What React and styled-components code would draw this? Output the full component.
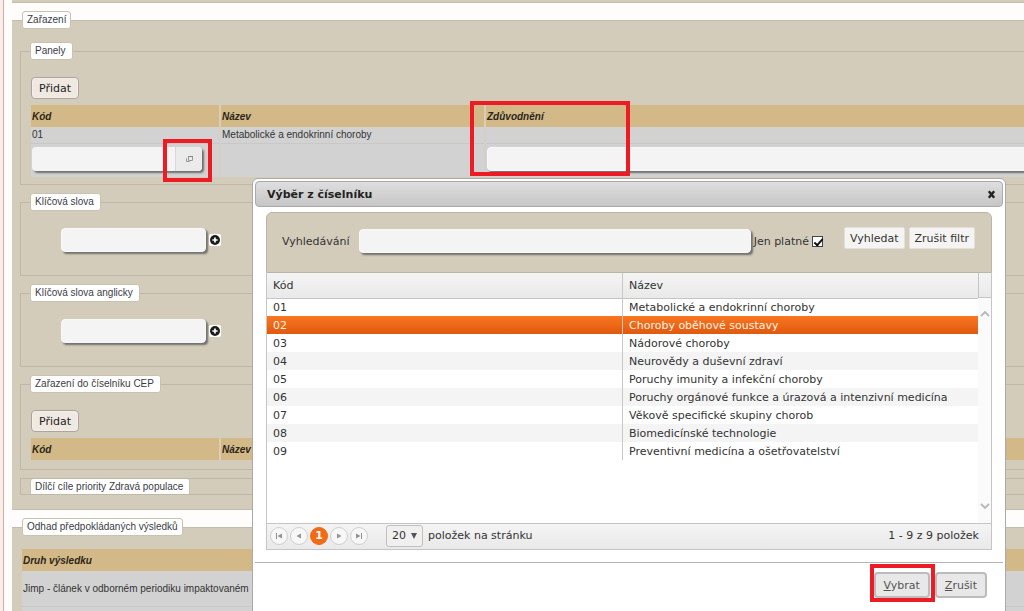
import React, {useState} from 'react';
import styled, {createGlobalStyle, css} from 'styled-components';

const GlobalStyle = createGlobalStyle`
*{
    box-sizing: border-box;
}
body{
    margin: 0;
    background: #fff;
    color: #333;
    font-family: "Liberation Sans", Arial, sans-serif;
    font-size: 10px;
}
table{
    font-size: inherit;
}
button, input, select{
    margin: 0;
    font-family: inherit;
    font-size: inherit;
    color: inherit;
}
`

const Page = styled.div`
position: relative;
display: flex;
height: 100vh;
overflow: hidden;
background: #fefdfb;

.edge{
    flex: none;
    width: 4px;
    margin-right: 8px;
    border-right: 1px solid #e0a9a0;
    background: #f8efeb;
}
`

/* the form is wider than the window and runs out of it on the right */
const Form = styled.main`
flex: 1;
min-width: 0;
margin-right: -40px;
`

const PreviousSection = styled.div`
height: 3px;
border-bottom: 1px solid #c3bbab;
background: #d4ccba;
`

const legendBox = css`
height: 18px;
padding: 0 6px 0 4px;
border: 1px solid #c9c1b2;
border-radius: 3px;
background: #fff;
color: #3c3c46;
line-height: 16px;
`

const Section = styled.fieldset`
min-width: 0;
margin: 8px 0 0;
padding: 13px ${props => props.$side}px 14px;
border: 1px solid #c3bbab;
border-left-color: #d4ccba;
background: #d4ccba;

> legend{
    ${legendBox}
    margin-left: ${props => 9 - props.$side}px;
    padding: 0 4px;
}
`

const Group = styled.fieldset`
min-width: 0;
margin: 0 0 8px;
padding: 17px 10px ${props => props.$bottom || 7}px;
border: 1px solid #c0b8a6;

> legend{
    ${legendBox}
    margin-left: -1px;
}
`

const FlatGroup = styled.fieldset`
min-width: 0;
margin: 0;
padding: 0 9px;
border: 1px solid #c0b8a6;

> legend{
    ${legendBox}
    float: left;
    height: 15px;
    border-width: 0 1px;
    border-radius: 3px 3px 0 0;
}
`

const AddButton = styled.button`
display: block;
height: 22px;
margin-bottom: 6px;
padding: 0 7px;
border: 1px solid #aaa5a0;
border-radius: 4px;
background: #efe9e2;
box-shadow: inset 0 0 0 1px #f6efe8;
color: #222;
font-family: "DejaVu Sans", Verdana, sans-serif;
font-size: 11px;
`

const DataTable = styled.table`
width: 100%;
border-collapse: collapse;
table-layout: fixed;

th, td{
    padding: 0 0 0 1px;
    text-align: left;
    border-left: 2px solid #d9cfb8;
}
td{
    border-left-color: #d3d0ca;
}
th:first-child, td:first-child{
    border-left: 0;
}
th{
    position: relative;
    height: 22px;
    background: #d3b988;
    color: #2c2619;
    font-style: italic;
}
td{
    height: 16px;
    background: #d2d2d2;
}
.edit td{
    height: 34px;
    padding-bottom: 3px;
    border-top: 1px solid #cac8c4;
}
.tall td{
    height: 35px;
    border-bottom: 1px solid #c8c8c8;
}
.code{
    width: 189px;
}
.name{
    width: 265px;
}
`

const TextBox = styled.input`
display: block;
width: ${props => props.$width || '100%'};
height: 24px;
padding: 0 6px;
border: 1px solid #f8f8f8;
border-radius: 4px;
background: #f4f4f4;
box-shadow: 2px 2px 2px #6f6f6f;
`

const Picker = styled.div`
position: relative;
display: flex;
width: 170px;
height: 24px;
border-radius: 4px;
background: #f4f4f4;
box-shadow: 2px 2px 2px #6f6f6f;

input{
    flex: 1;
    min-width: 0;
    padding: 0 6px;
    border: 0;
    background: none;
}
button{
    display: flex;
    align-items: center;
    justify-content: center;
    width: 27px;
    padding: 0;
    border: 0;
    border-left: 1px solid #d8d8d8;
    border-radius: 0 4px 4px 0;
    background: #ebebeb;
}
`

const Highlight = styled.span`
position: absolute;
z-index: 1;
top: ${props => props.$top}px;
left: ${props => props.$left}px;
width: ${props => props.$width}px;
height: ${props => props.$height}px;
border: 4px solid #ed1c24;
pointer-events: none;
`

const KeywordRow = styled.div`
display: flex;
align-items: center;
gap: 3px;
height: 24px;
margin: 0 0 16px 30px;

button{
    display: flex;
    width: 12px;
    height: 12px;
    padding: 0;
    border: 0;
    border-radius: 2px;
    background: #fff;
}
`

const Dialog = styled.section`
position: absolute;
z-index: 2;
top: 178px;
left: 252px;
right: 18px;
padding: 2px;
border: 1px solid #aaa;
border-radius: 6px;
background: #fff;
color: #333;
font-family: "DejaVu Sans", Verdana, sans-serif;
font-size: 11px;
`

const TitleBar = styled.header`
display: flex;
align-items: center;
justify-content: space-between;
height: 26px;
padding: 0 5px 0 11px;
border: 1px solid #aaa;
border-radius: 4px;
background: linear-gradient(#dedede, #c6c6c6);

h2{
    margin: 0;
    color: #222;
    font-size: 11px;
}
button{
    display: flex;
    padding: 1px;
    border: 0;
    background: none;
}
`

const DialogBody = styled.div`
padding: 5px 11px 12px;
`

const SearchPanel = styled.form`
display: flex;
align-items: flex-start;
gap: 21px;
height: 61px;
padding: 14px 16px 0 15px;
border: 1px solid #bbb5a8;
border-radius: 6px 6px 0 0;
background: #d4ccba;

.query{
    display: flex;
    flex: 1;
    align-items: center;
    gap: 3px;
    height: 28px;
}
.query label:first-child{
    margin-right: 6px;
}
.query ${TextBox}{
    flex: 1;
    min-width: 0;
}
.buttons{
    display: flex;
    gap: 4px;
}
`

const FilterButton = styled.button`
height: 22px;
padding: 0 5px;
border: 1px solid #e2e0dc;
border-radius: 2px;
background: #f5f4f3;
`

const CheckBox = styled.input`
position: relative;
width: 11px;
height: 11px;
appearance: none;
border: 1px solid #444;
background: #fff;

&:checked::after{
    content: "";
    position: absolute;
    top: 0;
    left: 3px;
    width: 3px;
    height: 7px;
    border: solid #111;
    border-width: 0 2px 2px 0;
    transform: rotate(42deg);
}
`

const Grid = styled.div`
display: flex;
align-items: stretch;
min-height: 250px;
border: solid #c5c5c5;
border-width: 0 1px;
`

const CodeTable = styled.table`
flex: 1;
align-self: flex-start;
border-collapse: collapse;
table-layout: fixed;

th, td{
    width: 50%;
    height: 18px;
    padding: 0 6px;
    text-align: left;
    font-weight: 400;
    white-space: nowrap;
}
th + th, td + td{
    border-left: 1px solid #c8c8c8;
}
th{
    height: 25px;
    border-bottom: 1px solid #c5c5c5;
    background: linear-gradient(#f4f4f4, #e9e9e9);
}
`

const CodeRow = styled.tr`
background: ${props => props.$shaded ? '#f4f4f4' : '#fff'};
cursor: pointer;

${props => props.$selected && css`
    background: linear-gradient(#fa7620, #df590f);
    color: #fff3e6;
`}
`

const Scroll = styled.div`
display: flex;
flex-direction: column;
align-items: center;
width: 13px;
background: #fafafa;

.cap{
    width: 100%;
    height: 25px;
    margin-bottom: 12px;
    border: solid #c5c5c5;
    border-width: 0 0 1px 1px;
    background: linear-gradient(#f4f4f4, #e9e9e9);
}
svg:last-child{
    margin: auto 0 13px;
}
`

const Pager = styled.footer`
display: flex;
align-items: center;
gap: 2px;
height: 27px;
padding: 0 12px 2px 3px;
border: 1px solid #c5c5c5;
background: linear-gradient(#f4f4f4, #e9e9e9);

.size{
    display: flex;
    align-items: center;
    gap: 5px;
    margin-left: 16px;
}
.total{
    margin-left: auto;
}
`

const PageButton = styled.button`
display: flex;
align-items: center;
justify-content: center;
width: 18px;
height: 18px;
padding: 0;
border: 1px solid ${props => props.$current ? '#f26a16' : '#cfcfcf'};
border-radius: 50%;
background: ${props => props.$current ? '#f26a16' : '#f7f7f7'};
color: ${props => props.$current ? '#fff' : '#888'};
font-weight: ${props => props.$current ? 700 : 400};
`

const SizeSelect = styled.span`
position: relative;

select{
    width: 37px;
    height: 22px;
    padding: 0 0 0 5px;
    appearance: none;
    border: 1px solid #c0c0c0;
    border-radius: 3px;
    background: #f0f0f0;
}
svg{
    position: absolute;
    top: 8px;
    right: 6px;
    pointer-events: none;
}
`

const ButtonPane = styled.div`
display: flex;
justify-content: flex-end;
gap: 5px;
padding: 9px 16px 20px;
border-top: 1px solid #b5b5b5;

.marked{
    position: relative;
}
`

const DialogButton = styled.button`
height: 26px;
padding: 0 8px;
border: 2px solid #bcbcbc;
border-radius: 4px;
background: #e8e8e8;
color: #555;
`

const codes = [
    ['01', 'Metabolické a endokrinní choroby'],
    ['02', 'Choroby oběhové soustavy'],
    ['03', 'Nádorové choroby'],
    ['04', 'Neurovědy a duševní zdraví'],
    ['05', 'Poruchy imunity a infekční choroby'],
    ['06', 'Poruchy orgánové funkce a úrazová a intenzivní medicína'],
    ['07', 'Věkově specifické skupiny chorob'],
    ['08', 'Biomedicínské technologie'],
    ['09', 'Preventivní medicína a ošetřovatelství'],
]

const WindowIcon = () => (
    <svg width='9' height='8' viewBox='0 0 9 8' fill='none' stroke='#9a9a9a'>
        <path d='M3.5 1.5h4v4h-4z M2 3.5h-.5v3h3V6' />
        <path d='M3 1.5h5' stroke='#858585' />
    </svg>
)

const PlusIcon = () => (
    <svg width='12' height='12' viewBox='0 0 12 12'>
        <circle cx='6' cy='6' r='5' fill='#1c1c1c' />
        <path d='M6 3.4v5.2M3.4 6h5.2' stroke='#fff' strokeWidth='1.7' />
    </svg>
)

const CloseIcon = () => (
    <svg width='9' height='9' viewBox='0 0 9 9' stroke='#222' strokeWidth='2.4'>
        <path d='M1.8 1.3l5.4 6.4M7.2 1.3L1.8 7.7' />
    </svg>
)

const Chevron = ({down}) => (
    <svg width='10' height='7' viewBox='0 0 10 7' fill='none' stroke='#b8b8b8' strokeWidth='1.8'>
        <path d={down ? 'M1 1l4 4 4-4' : 'M1 6l4-4 4 4'} />
    </svg>
)

const arrows = {
    first: 'M1 1h1v6H1z M7 1.5v5L2.5 4z',
    prev: 'M6 1.5v5L1.5 4z',
    next: 'M2 1.5v5L6.5 4z',
    last: 'M6 1h1v6H6z M1 1.5v5L5.5 4z',
}

const Arrow = ({kind}) => (
    <svg width='8' height='8' viewBox='0 0 8 8' fill='#929292'>
        <path d={arrows[kind]} />
    </svg>
)

const Keywords = ({title}) => (
    <Group>
        <legend>{title}</legend>
        <KeywordRow>
            <TextBox $width='145px' aria-label={title} />
            <button type='button' aria-label='Přidat'><PlusIcon /></button>
        </KeywordRow>
    </Group>
)

const CodeDialog = () => {
    const [selected, setSelected] = useState('02')

    return (<Dialog role='dialog' aria-labelledby='dialog-title'>
        <TitleBar>
            <h2 id='dialog-title'>Výběr z číselníku</h2>
            <button type='button' aria-label='Zavřít'><CloseIcon /></button>
        </TitleBar>
        <DialogBody>
            <SearchPanel onSubmit={e => e.preventDefault()}>
                <div className='query'>
                    <label htmlFor='query'>Vyhledávání</label>
                    <TextBox id='query' />
                    <label htmlFor='valid'>Jen platné</label>
                    <CheckBox id='valid' type='checkbox' defaultChecked />
                </div>
                <div className='buttons'>
                    <FilterButton>Vyhledat</FilterButton>
                    <FilterButton type='reset'>Zrušit filtr</FilterButton>
                </div>
            </SearchPanel>
            <Grid>
                <CodeTable>
                    <thead>
                        <tr><th>Kód</th><th>Název</th></tr>
                    </thead>
                    <tbody>
                        {codes.map(([code, name], i) => (
                            <CodeRow
                                key={code}
                                $shaded={i % 2 === 1}
                                $selected={code === selected}
                                onClick={() => setSelected(code)}
                            >
                                <td>{code}</td>
                                <td>{name}</td>
                            </CodeRow>
                        ))}
                    </tbody>
                </CodeTable>
                <Scroll>
                    <div className='cap' />
                    <Chevron />
                    <Chevron down />
                </Scroll>
            </Grid>
            <Pager>
                <PageButton aria-label='První'><Arrow kind='first' /></PageButton>
                <PageButton aria-label='Předchozí'><Arrow kind='prev' /></PageButton>
                <PageButton $current>1</PageButton>
                <PageButton aria-label='Další'><Arrow kind='next' /></PageButton>
                <PageButton aria-label='Poslední'><Arrow kind='last' /></PageButton>
                <div className='size'>
                    <SizeSelect>
                        <select id='size' defaultValue='20'>
                            <option>20</option>
                            <option>50</option>
                        </select>
                        <svg width='6' height='6' viewBox='0 0 6 6' fill='#555'>
                            <path d='M0 0h6L3 6z' />
                        </svg>
                    </SizeSelect>
                    <label htmlFor='size'>položek na stránku</label>
                </div>
                <span className='total'>1 - 9 z 9 položek</span>
            </Pager>
        </DialogBody>
        <ButtonPane>
            <div className='marked'>
                <DialogButton type='button'><u>V</u>ybrat</DialogButton>
                <Highlight $top={-8} $left={-4} $width={65} $height={38} />
            </div>
            <DialogButton type='button'><u>Z</u>rušit</DialogButton>
        </ButtonPane>
    </Dialog>)
}

const App = () => {
    return (<Page>
        <GlobalStyle />
        <div className='edge' />
        <Form>
            <PreviousSection />
            <Section $side={7}>
                <legend>Zařazení</legend>
                <Group>
                    <legend>Panely</legend>
                    <AddButton type='button'>Přidat</AddButton>
                    <DataTable>
                        <thead>
                            <tr>
                                <th className='code'>Kód</th>
                                <th className='name'>Název</th>
                                <th>
                                    Zdůvodnění
                                    <Highlight $top={-4} $left={-16} $width={160} $height={75} />
                                </th>
                            </tr>
                        </thead>
                        <tbody>
                            <tr>
                                <td>01</td>
                                <td>Metabolické a endokrinní choroby</td>
                                <td />
                            </tr>
                            <tr className='edit'>
                                <td>
                                    <Picker>
                                        <input aria-label='Kód' />
                                        <button type='button' aria-label='Vybrat'><WindowIcon /></button>
                                        <Highlight $top={-8} $left={131} $width={49} $height={43} />
                                    </Picker>
                                </td>
                                <td />
                                <td><TextBox aria-label='Zdůvodnění' /></td>
                            </tr>
                        </tbody>
                    </DataTable>
                </Group>
                <Keywords title='Klíčová slova' />
                <Keywords title='Klíčová slova anglicky' />
                <Group $bottom={9}>
                    <legend>Zařazení do číselníku CEP</legend>
                    <AddButton type='button'>Přidat</AddButton>
                    <DataTable>
                        <thead>
                            <tr>
                                <th className='code'>Kód</th>
                                <th className='name'>Název</th>
                                <th />
                            </tr>
                        </thead>
                    </DataTable>
                </Group>
                <FlatGroup>
                    <legend>Dílčí cíle priority Zdravá populace</legend>
                </FlatGroup>
            </Section>
            <Section $side={9}>
                <legend>Odhad předpokládaných výsledků</legend>
                <DataTable>
                    <thead>
                        <tr><th>Druh výsledku</th></tr>
                    </thead>
                    <tbody>
                        <tr className='tall'><td>Jimp - článek v odborném periodiku impaktovaném</td></tr>
                        <tr className='tall'><td /></tr>
                    </tbody>
                </DataTable>
            </Section>
        </Form>
        <CodeDialog />
    </Page>)
}

export default App
